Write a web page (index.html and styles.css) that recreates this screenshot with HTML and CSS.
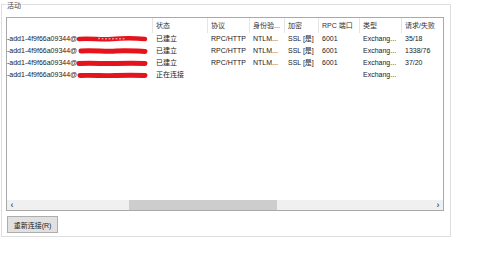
FILE: index.html
```html
<!DOCTYPE html>
<html>
<head>
<meta charset="utf-8">
<link rel="stylesheet" href="styles.css">
</head>
<body>
<div class="group">
  <span class="legend">活动</span>
  <div class="list">
    <div class="row head">
      <div class="c"></div>
      <div class="c">状态</div>
      <div class="c">协议</div>
      <div class="c">身份验...</div>
      <div class="c">加密</div>
      <div class="c">RPC 端口</div>
      <div class="c">类型</div>
      <div class="c">请求/失败</div>
    </div>
    <div class="body">
      <div class="row">
        <div class="c name">-add1-4f9f66a09344@<svg class="red" width="72" height="8" viewBox="0 0 72 8"><path d="M3 4 C15 3 25 5 36 4 S58 3 69 4" stroke="#e5141c" stroke-width="4.5" stroke-linecap="round" fill="none"/><path d="M22 3.6 L50 3.8" stroke="#f28a8e" stroke-width="1.5" stroke-dasharray="2 1.5" fill="none"/></svg></div>
        <div class="c">已建立</div><div class="c">RPC/HTTP</div><div class="c">NTLM...</div><div class="c">SSL [是]</div><div class="c">6001</div><div class="c">Exchang...</div><div class="c">35/18</div>
      </div>
      <div class="row">
        <div class="c name">-add1-4f9f66a09344@<svg class="red" width="72" height="8" viewBox="0 0 72 8"><path d="M5 4 C18 3 30 5 40 4 S58 4 69 4.5" stroke="#e5141c" stroke-width="5" stroke-linecap="round" fill="none"/></svg></div>
        <div class="c">已建立</div><div class="c">RPC/HTTP</div><div class="c">NTLM...</div><div class="c">SSL [是]</div><div class="c">6001</div><div class="c">Exchang...</div><div class="c">1338/76</div>
      </div>
      <div class="row">
        <div class="c name">-add1-4f9f66a09344@<svg class="red" width="72" height="8" viewBox="0 0 72 8"><path d="M3 4.5 C16 3.5 28 5 40 4.5 S58 4 69 4.5" stroke="#e5141c" stroke-width="5" stroke-linecap="round" fill="none"/></svg></div>
        <div class="c">已建立</div><div class="c">RPC/HTTP</div><div class="c">NTLM...</div><div class="c">SSL [是]</div><div class="c">6001</div><div class="c">Exchang...</div><div class="c">37/20</div>
      </div>
      <div class="row">
        <div class="c name">-add1-4f9f66a09344@<svg class="red" width="72" height="8" viewBox="0 0 72 8"><path d="M4 4.5 C16 4 28 5 40 4.5 S58 4 69 4.5" stroke="#e5141c" stroke-width="5" stroke-linecap="round" fill="none"/></svg></div>
        <div class="c">正在连接</div><div class="c"></div><div class="c"></div><div class="c"></div><div class="c"></div><div class="c">Exchang...</div><div class="c"></div>
      </div>
    </div>
    <div class="hscroll">
      <span class="arrow">&#8249;</span>
      <div class="track"><div class="thumb"></div></div>
      <span class="arrow">&#8250;</span>
    </div>
  </div>
  <button class="btn">重新连接(R)</button>
</div>
</body>
</html>
```
FILE: styles.css
```css
html, body {
  margin: 0;
  background: #ffffff;
}
body {
  font-family: "Liberation Sans", "Noto Sans CJK SC", sans-serif;
  font-size: 7px;
  color: #1a1a1a;
}
.group {
  position: relative;
  box-sizing: border-box;
  margin: 4px 0 0 1px;
  width: 450px;
  height: 233px;
  border: 1px solid #dedede;
  padding: 12px 0 0 4px;
}
.legend {
  position: absolute;
  top: -4px;
  left: 4px;
  padding: 0 1px;
  background: #ffffff;
  color: #444;
  font-size: 7px;
  line-height: 10px;
}
.list {
  box-sizing: border-box;
  width: 438px;
  height: 194px;
  border: 1px solid #a9a9a9;
  display: flex;
  flex-direction: column;
}
.row {
  display: grid;
  grid-template-columns: 145px 55px 42px 35px 34px 41px 42px 42px;
  height: 12px;
  line-height: 12px;
  white-space: nowrap;
}
.row.head {
  height: 15px;
  line-height: 15px;
  color: #333;
}
.row.head .c + .c {
  border-left: 1px solid #e5e5e5;
  padding-left: 3px;
}
.c {
  overflow: hidden;
  padding-left: 4px;
  box-sizing: border-box;
}
.name {
  padding-left: 0;
  display: flex;
  align-items: center;
}
.red {
  flex: none;
  margin-left: -1px;
}
.body {
  flex: 1;
}
.hscroll {
  height: 10px;
  display: flex;
  align-items: center;
  background: #f0f0f0;
}
.arrow {
  width: 10px;
  text-align: center;
  font-size: 9px;
  line-height: 10px;
  color: #606060;
  font-weight: bold;
}
.track {
  flex: 1;
  height: 10px;
  display: flex;
  padding-left: 112px;
}
.thumb {
  width: 148px;
  height: 10px;
  background: #cdcdcd;
}
.btn {
  display: block;
  margin: 5px 0 0 1px;
  width: 51px;
  height: 17px;
  padding: 0;
  background: #e1e1e1;
  border: 1px solid #adadad;
  border-radius: 0;
  font-family: "Liberation Sans", "Noto Sans CJK SC", sans-serif;
  font-size: 7px;
  color: #222;
}
```
